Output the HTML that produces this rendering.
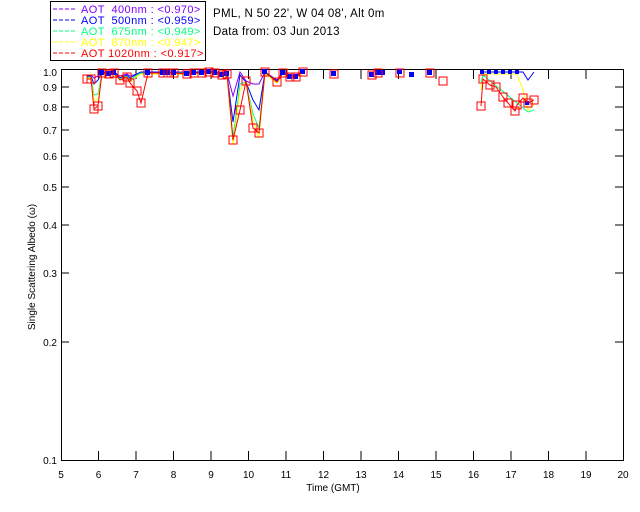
<!DOCTYPE html>
<html><head><meta charset="utf-8"><style>
html,body{margin:0;padding:0;background:#fff;width:640px;height:512px;overflow:hidden}
svg{display:block;font-family:"Liberation Sans",sans-serif}
</style></head><body>
<svg width="640" height="512" viewBox="0 0 640 512" xmlns="http://www.w3.org/2000/svg">
<rect width="640" height="512" fill="#fff"/>
<!-- legend -->
<rect x="50.5" y="1.5" width="155" height="59" fill="none" stroke="#000" stroke-width="1"/>
<g font-size="11" letter-spacing="0.4">
<line x1="53" y1="9" x2="75" y2="9" stroke="#7f00ff" stroke-dasharray="4,2"/>
<text x="81" y="13" fill="#7f00ff" xml:space="preserve">AOT  400nm : &lt;0.970&gt;</text>
<line x1="53" y1="20" x2="75" y2="20" stroke="#0000ff" stroke-dasharray="4,2"/>
<text x="81" y="24" fill="#0000ff" xml:space="preserve">AOT  500nm : &lt;0.959&gt;</text>
<line x1="53" y1="31" x2="75" y2="31" stroke="#00ff7f" stroke-dasharray="4,2"/>
<text x="81" y="35" fill="#00ff7f" xml:space="preserve">AOT  675nm : &lt;0.949&gt;</text>
<line x1="53" y1="42" x2="75" y2="42" stroke="#ffff00" stroke-dasharray="4,2"/>
<text x="81" y="46" fill="#ffff00" xml:space="preserve">AOT  870nm : &lt;0.947&gt;</text>
<line x1="53" y1="53" x2="75" y2="53" stroke="#ff0000" stroke-dasharray="4,2"/>
<text x="81" y="57" fill="#ff0000" xml:space="preserve">AOT 1020nm : &lt;0.917&gt;</text>
</g>
<g font-size="11.5" fill="#000" letter-spacing="0.3">
<text x="213" y="17">PML, N 50 22', W 04 08', Alt 0m</text>
<text x="213" y="35">Data from: 03 Jun 2013</text>
</g>
<!-- frame -->
<rect x="61.5" y="69.5" width="562" height="391" fill="none" stroke="#000" stroke-width="1"/>
<g stroke="#000">
<path d="M61 87h8M61 107h8M61 130h8M61 156h8M61 187h8M61 225h8M61 273h8M61 342h8
M623 87h-8M623 107h-8M623 130h-8M623 156h-8M623 187h-8M623 225h-8M623 273h-8M623 342h-8"/>
<path d="M98.5 460v-9M136 460v-9M173.5 460v-9M211 460v-9M248.5 460v-9M286 460v-9M323.5 460v-9M361 460v-9M398.5 460v-9M436 460v-9M473.5 460v-9M511 460v-9M548.5 460v-9M586 460v-9
M98.5 70v9M136 70v9M173.5 70v9M211 70v9M248.5 70v9M286 70v9M323.5 70v9M361 70v9M398.5 70v9M436 70v9M473.5 70v9M511 70v9M548.5 70v9M586 70v9"/>
</g>
<g font-size="10" fill="#000" text-anchor="end">
<text x="57" y="76">1.0</text><text x="57" y="91">0.9</text><text x="57" y="111">0.8</text>
<text x="57" y="134">0.7</text><text x="57" y="160">0.6</text><text x="57" y="191">0.5</text>
<text x="57" y="229">0.4</text><text x="57" y="277">0.3</text><text x="57" y="346">0.2</text>
<text x="57" y="464">0.1</text>
</g>
<g font-size="10" fill="#000" text-anchor="middle">
<text x="61" y="478">5</text><text x="98.5" y="478">6</text><text x="136" y="478">7</text><text x="173.5" y="478">8</text>
<text x="211" y="478">9</text><text x="248.5" y="478">10</text><text x="286" y="478">11</text><text x="323.5" y="478">12</text>
<text x="361" y="478">13</text><text x="398.5" y="478">14</text><text x="436" y="478">15</text><text x="473.5" y="478">16</text>
<text x="511" y="478">17</text><text x="548.5" y="478">18</text><text x="586" y="478">19</text><text x="623" y="478">20</text>
<text x="333" y="491">Time (GMT)</text>
<text transform="translate(35,267) rotate(-90)" font-size="10">Single Scattering Albedo (ω)</text>
</g>
<g fill="none" stroke-width="1">
<polyline stroke="#7f00ff" points="87,75 91,75 94,78 98,76 102,72 109,72 114,72 120,76 127,74 130,76 137,74 141,72 148,72 163,72 168,72 174,72 187,72 194,72 202,72 209,71 215,72 222,73 227,73 233,96 240,72 246,81 253,84 259,84 265,72 277,80 283,72 290,75 296,75 303,71"/>
<polyline stroke="#0000ff" points="87,76 91,76 94,84 98,80 102,72 109,73 114,72 120,78 127,75 130,78 137,74 141,72 148,72 163,72 168,72 174,72 187,73 194,72 202,72 209,71 215,72 222,74 227,74 233,122 240,75 246,82 253,100 259,110 265,72 277,81 283,72 290,76 296,76 303,71"/>
<polyline stroke="#00ff7f" points="87,77 91,77 94,95 98,94 102,73 109,73 114,73 120,79 127,76 130,80 137,75 141,73 148,73 163,73 168,73 174,73 187,73 194,73 202,73 209,72 215,73 222,74 227,74 233,138 240,84 246,82 253,114 259,128 265,73 277,82 283,73 290,76 296,76 303,72"/>
<polyline stroke="#ffff00" points="87,78 91,78 94,100 98,100 102,74 109,75 114,74 120,80 127,77 130,82 137,76 141,74 148,74 163,74 168,74 174,74 187,75 194,74 202,74 209,73 215,74 222,76 227,76 233,145 240,90 246,82 253,120 259,138 265,74 277,83 283,74 290,78 296,78 303,73"/>
<polyline stroke="#0000ff" points="483,72 490,72 496,72 503,72 508,72 515,72 517,72 523,72 528,80 534,72"/>
<polyline stroke="#ffff00" points="481,90 483,74 490,74 496,74 503,74 508,74 515,74 517,74 523,90 528,110 534,105"/>
<polyline stroke="#00ff7f" points="481,82 483,75 528,112 534,110"/>
</g>
<polyline fill="none" stroke="#ff0000" stroke-width="1" points="87,79 91,79 94,109 98,106 102,73 109,74 114,73 120,80 127,77 130,83 137,91 141,103 148,73 163,73 168,73 174,73 187,74 194,73 202,73 209,72 215,73 222,75 227,74 233,140 240,110 246,81 253,128 259,133 265,72 277,82 283,73 290,77 296,77 303,72"/>
<polyline fill="none" stroke="#ff0000" stroke-width="1" points="481,106 483,79 490,85 496,87 503,97 508,103 515,111 517,105 523,98 528,103 534,100"/>
<g fill="#0000ff">
<rect x="99" y="70" width="5" height="5"/><rect x="106" y="71" width="5" height="5"/><rect x="111" y="70" width="5" height="5"/>
<rect x="145" y="70" width="5" height="5"/><rect x="160" y="70" width="5" height="5"/><rect x="165" y="70" width="5" height="5"/>
<rect x="171" y="70" width="5" height="5"/><rect x="184" y="71" width="5" height="5"/><rect x="191" y="70" width="5" height="5"/>
<rect x="199" y="70" width="5" height="5"/><rect x="206" y="69" width="5" height="5"/><rect x="212" y="70" width="5" height="5"/>
<rect x="219" y="72" width="5" height="5"/><rect x="224" y="71" width="5" height="5"/><rect x="262" y="69" width="5" height="5"/>
<rect x="280" y="70" width="5" height="5"/><rect x="287" y="74" width="5" height="5"/><rect x="293" y="74" width="5" height="5"/>
<rect x="300" y="69" width="5" height="5"/><rect x="331" y="71" width="5" height="5"/><rect x="369" y="72" width="5" height="5"/>
<rect x="375" y="70" width="5" height="5"/><rect x="380" y="70" width="5" height="5"/><rect x="397" y="69" width="5" height="5"/>
<rect x="409" y="72" width="5" height="5"/><rect x="427" y="70" width="5" height="5"/>
<rect x="480" y="70" width="4" height="4"/><rect x="487" y="70" width="4" height="4"/><rect x="494" y="70" width="4" height="4"/>
<rect x="501" y="70" width="4" height="4"/><rect x="508" y="70" width="4" height="4"/><rect x="515" y="70" width="4" height="4"/>
<rect x="525" y="101" width="4" height="4"/>
</g>
<g fill="none" stroke="#ff0000" stroke-width="1">
<rect x="83" y="75" width="8" height="8"/><rect x="87" y="75" width="8" height="8"/><rect x="90" y="105" width="8" height="8"/>
<rect x="94" y="102" width="8" height="8"/><rect x="98" y="69" width="8" height="8"/><rect x="105" y="70" width="8" height="8"/>
<rect x="110" y="69" width="8" height="8"/><rect x="116" y="76" width="8" height="8"/><rect x="123" y="73" width="8" height="8"/>
<rect x="126" y="79" width="8" height="8"/><rect x="133" y="87" width="8" height="8"/><rect x="137" y="99" width="8" height="8"/>
<rect x="144" y="69" width="8" height="8"/><rect x="159" y="69" width="8" height="8"/><rect x="164" y="69" width="8" height="8"/>
<rect x="170" y="69" width="8" height="8"/><rect x="183" y="70" width="8" height="8"/><rect x="190" y="69" width="8" height="8"/>
<rect x="198" y="69" width="8" height="8"/><rect x="205" y="68" width="8" height="8"/><rect x="211" y="69" width="8" height="8"/>
<rect x="218" y="71" width="8" height="8"/><rect x="223" y="70" width="8" height="8"/><rect x="229" y="136" width="8" height="8"/>
<rect x="236" y="106" width="8" height="8"/><rect x="242" y="77" width="8" height="8"/><rect x="249" y="124" width="8" height="8"/>
<rect x="255" y="129" width="8" height="8"/><rect x="261" y="68" width="8" height="8"/><rect x="273" y="78" width="8" height="8"/>
<rect x="279" y="69" width="8" height="8"/><rect x="286" y="73" width="8" height="8"/><rect x="292" y="73" width="8" height="8"/>
<rect x="299" y="68" width="8" height="8"/><rect x="330" y="70" width="8" height="8"/><rect x="368" y="71" width="8" height="8"/>
<rect x="374" y="69" width="8" height="8"/><rect x="396" y="69" width="8" height="8"/><rect x="426" y="69" width="8" height="8"/>
<rect x="439" y="77" width="8" height="8"/>
<rect x="477" y="102" width="8" height="8"/><rect x="479" y="75" width="8" height="8"/><rect x="486" y="81" width="8" height="8"/>
<rect x="492" y="83" width="8" height="8"/><rect x="499" y="93" width="8" height="8"/><rect x="504" y="99" width="8" height="8"/>
<rect x="511" y="107" width="8" height="8"/><rect x="513" y="101" width="8" height="8"/><rect x="519" y="94" width="8" height="8"/>
<rect x="524" y="99" width="8" height="8"/><rect x="530" y="96" width="8" height="8"/>
</g>
</svg>
</body></html>
